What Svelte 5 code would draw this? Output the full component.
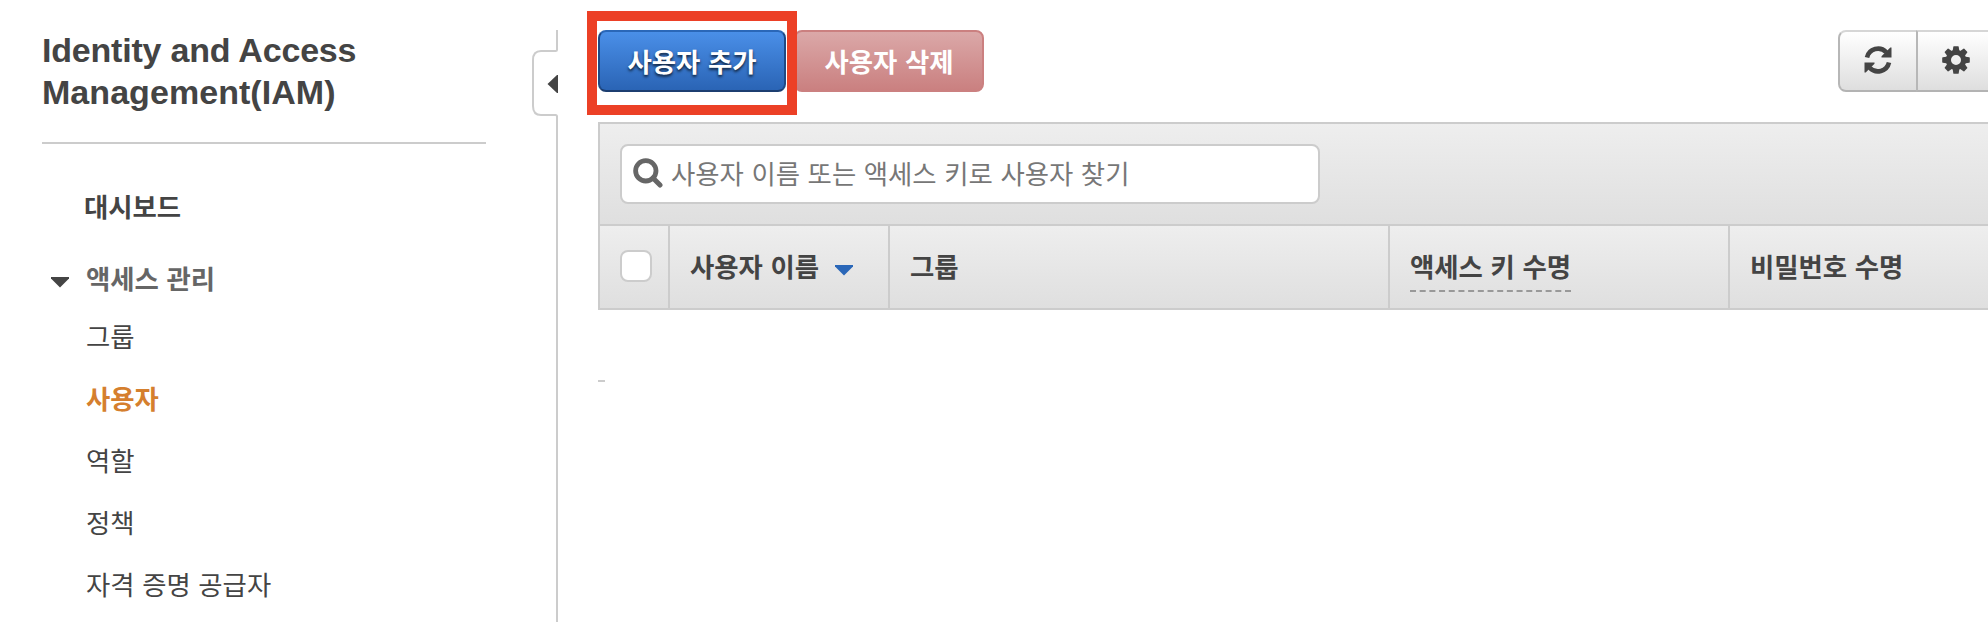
<script>
  const links = [
    { label: '그룹' },
    { label: '사용자', active: true },
    { label: '역할' },
    { label: '정책' },
    { label: '자격 증명 공급자' }
  ];
  const teeth = [0, 45, 90, 135, 180, 225, 270, 315];
</script>

<div class="page">
  <aside>
    <h1>Identity and Access<br /><span>Management(IAM)</span></h1>
    <nav>
      <div class="dash">대시보드</div>
      <div class="section">
        <svg width="18" height="11" viewBox="0 0 18 11"><path d="M0 0H18V1.5L9 10.5L0 1.5Z" fill="#444" /></svg>
        <span>액세스 관리</span>
      </div>
      <ul>
        {#each links as link}
          <li class:active={link.active}>{link.label}</li>
        {/each}
      </ul>
    </nav>
  </aside>

  <div class="rail">
    <svg width="26" height="592" viewBox="0 0 26 592" fill="none">
      <path d="M25 0V19.5Q25 21 23.500 21H9Q1 21 1 30V76Q1 85 9 85H23.500Q25 85 25 86.500V592" stroke="#ccc" stroke-width="2" />
      <path d="M26 45V63H25L15.500 54L25 45Z" fill="#444" />
    </svg>
  </div>

  <main>
    <div class="toolbar">
      <div class="actions">
        <div class="marked">
          <button class="add"><span>사용자 추가</span></button>
        </div>
        <button class="remove"><span>사용자 삭제</span></button>
      </div>
      <div class="tools">
        <button aria-label="새로 고침">
          <svg width="28" height="28" viewBox="0 0 28 28">
            <g id="half">
              <path d="M3 11.500A11.300 11.300 0 0 1 22.300 6.300" fill="none" stroke="#444" stroke-width="4.600" />
              <path d="M27.500 1.500V11.500H17.500V10.300L26.300 1.500Z" fill="#444" />
            </g>
            <use href="#half" transform="rotate(180 14 14)" />
          </svg>
        </button>
        <button aria-label="설정">
          <svg width="28" height="28" viewBox="0 0 28 28" fill="#444">
            <path fill-rule="evenodd" d="M14 3.800A10.200 10.200 0 1 1 14 24.200A10.200 10.200 0 1 1 14 3.800ZM14 9A5 5 0 1 0 14 19A5 5 0 1 0 14 9Z" />
            {#each teeth as angle}
              <path d="M10.500 6L11.300 0.800Q11.400 0.200 12 0.200H16Q16.600 0.200 16.700 0.800L17.500 6Z" transform="rotate({angle} 14 14)" />
            {/each}
          </svg>
        </button>
      </div>
    </div>

    <section class="table">
      <div class="filter">
        <div class="search">
          <svg width="30" height="30" viewBox="0 0 30 30" fill="none" stroke="#666"><circle cx="12.800" cy="12.800" r="10.200" stroke-width="4.800" /><path d="M20 20L27 27" stroke-width="5" stroke-linecap="round" /></svg>
          <span>사용자 이름 또는 액세스 키로 사용자 찾기</span>
        </div>
      </div>
      <div class="head">
        <div class="check"><i></i></div>
        <div class="name">
          <span>사용자 이름</span>
          <svg width="18" height="11" viewBox="0 0 18 11"><path d="M0 0H18V1.500L9 10.500L0 1.500Z" fill="#2a67b8" /></svg>
        </div>
        <div class="group"><span>그룹</span></div>
        <div class="key"><span class="hint">액세스 키 수명</span></div>
        <div class="pass"><span>비밀번호 수명</span></div>
      </div>
    </section>
    <div class="stub"></div>
  </main>
</div>

<style>
  :global(body) { overflow: hidden; background: #fff; }
  *, .marked::after { box-sizing: border-box; }
  svg { display: block; flex: none; }
  .page {
    display: flex;
    width: 1988px;
    height: 622px;
    overflow: hidden;
    color: #444;
    font: 26.4px/36px "Noto Sans CJK KR", sans-serif;
    word-spacing: 1.7px;
    white-space: nowrap;
  }
  aside { flex: none; width: 532px; padding: 29px 46px 0 42px; }
  h1 {
    margin: 0;
    height: 115px;
    border-bottom: 2px solid #ccc;
    font: bold 34px/42px "Liberation Sans", sans-serif;
    letter-spacing: -0.2px;
    word-spacing: 0;
  }
  h1 span { letter-spacing: 0.05px; }
  nav { padding: 44px 0 0 42px; }
  .dash { font-weight: 700; }
  .section {
    display: flex;
    align-items: center;
    gap: 17px;
    margin: 36px 0 0 -33px;
    color: #666;
    font-weight: 700;
  }
  .section svg { margin-top: 9px; }
  ul { margin: 9px 0 0; padding: 0 0 0 2px; list-style: none; }
  li { height: 62px; line-height: 62px; }
  .active { color: #d57f2e; font-weight: 700; }
  .rail { flex: none; width: 26px; padding-top: 30px; }
  main { flex: 1; min-width: 0; padding: 30px 0 0 40px; }
  .toolbar { display: flex; justify-content: space-between; height: 92px; }
  .actions { display: flex; gap: 8px; align-items: flex-start; }
  button {
    display: block;
    height: 62px;
    margin: 0;
    padding: 0;
    font: inherit;
    word-spacing: inherit;
  }
  .marked { position: relative; }
  .marked::after {
    content: "";
    position: absolute;
    z-index: 2;
    left: -11px;
    top: -19px;
    width: 210px;
    height: 104px;
    border: 10px solid #ec4026;
  }
  .add, .remove {
    width: 188px;
    padding-bottom: 1px;
    border-radius: 8px;
    color: #fff;
    font-weight: 700;
  }
  .remove { width: 190px; }
  .add {
    border: 2px solid;
    border-color: #2a67b8 #1f4a86 #1c3e70;
    background: linear-gradient(#4a8fe8, #2a64b5);
    text-shadow: 0 2px 3px rgba(0, 0, 0, 0.75);
  }
  .remove {
    border: 2px solid #cb8080;
    background: linear-gradient(#dba8a8, #ca8080);
  }
  .tools { display: flex; width: 150px; overflow: hidden; }
  .tools button {
    display: flex;
    flex: none;
    align-items: center;
    justify-content: center;
    width: 80px;
    border: 2px solid;
    border-color: #d6d6d6 #b7b7b7 #b3b3b3;
    border-radius: 8px 0 0 8px;
    background: linear-gradient(#fff, #dedede);
  }
  .tools button + button { margin-left: -2px; border-radius: 0 8px 8px 0; }
  .tools svg { margin-top: -3px; }
  .table { border: 2px solid #ccc; border-right: 0; }
  .filter {
    height: 100px;
    padding: 20px;
    background: linear-gradient(#eee, #dfdfdf);
  }
  .search {
    display: flex;
    align-items: center;
    gap: 8px;
    width: 700px;
    height: 60px;
    padding-left: 11px;
    border: 2px solid #ccc;
    border-radius: 8px;
    background: #fff;
    color: #777;
  }
  .search svg { margin-top: -2px; }
  .search span { margin-top: -2px; }
  .head {
    display: grid;
    grid-template-columns: 70px 220px 500px 340px 1fr;
    height: 84px;
    border-top: 2px solid #ccc;
    background: linear-gradient(#eee, #dfdfdf);
    font-weight: 700;
  }
  .head > div {
    display: flex;
    align-items: center;
    padding-left: 20px;
    border-right: 2px solid #ccc;
  }
  .head > .pass { border-right: 0; }
  .head span { margin-top: -2px; }
  .check i {
    width: 32px;
    height: 32px;
    margin-bottom: 2px;
    border: 2px solid #ccc;
    border-radius: 8px;
    background: #fff;
  }
  .name { gap: 16px; }
  .name svg { margin-top: 6px; }
  .head .hint { height: 44px; margin-top: 6px; border-bottom: 2px dashed #999; }
  .stub { width: 7px; height: 2px; margin-top: 70px; background: #ccc; }
</style>
